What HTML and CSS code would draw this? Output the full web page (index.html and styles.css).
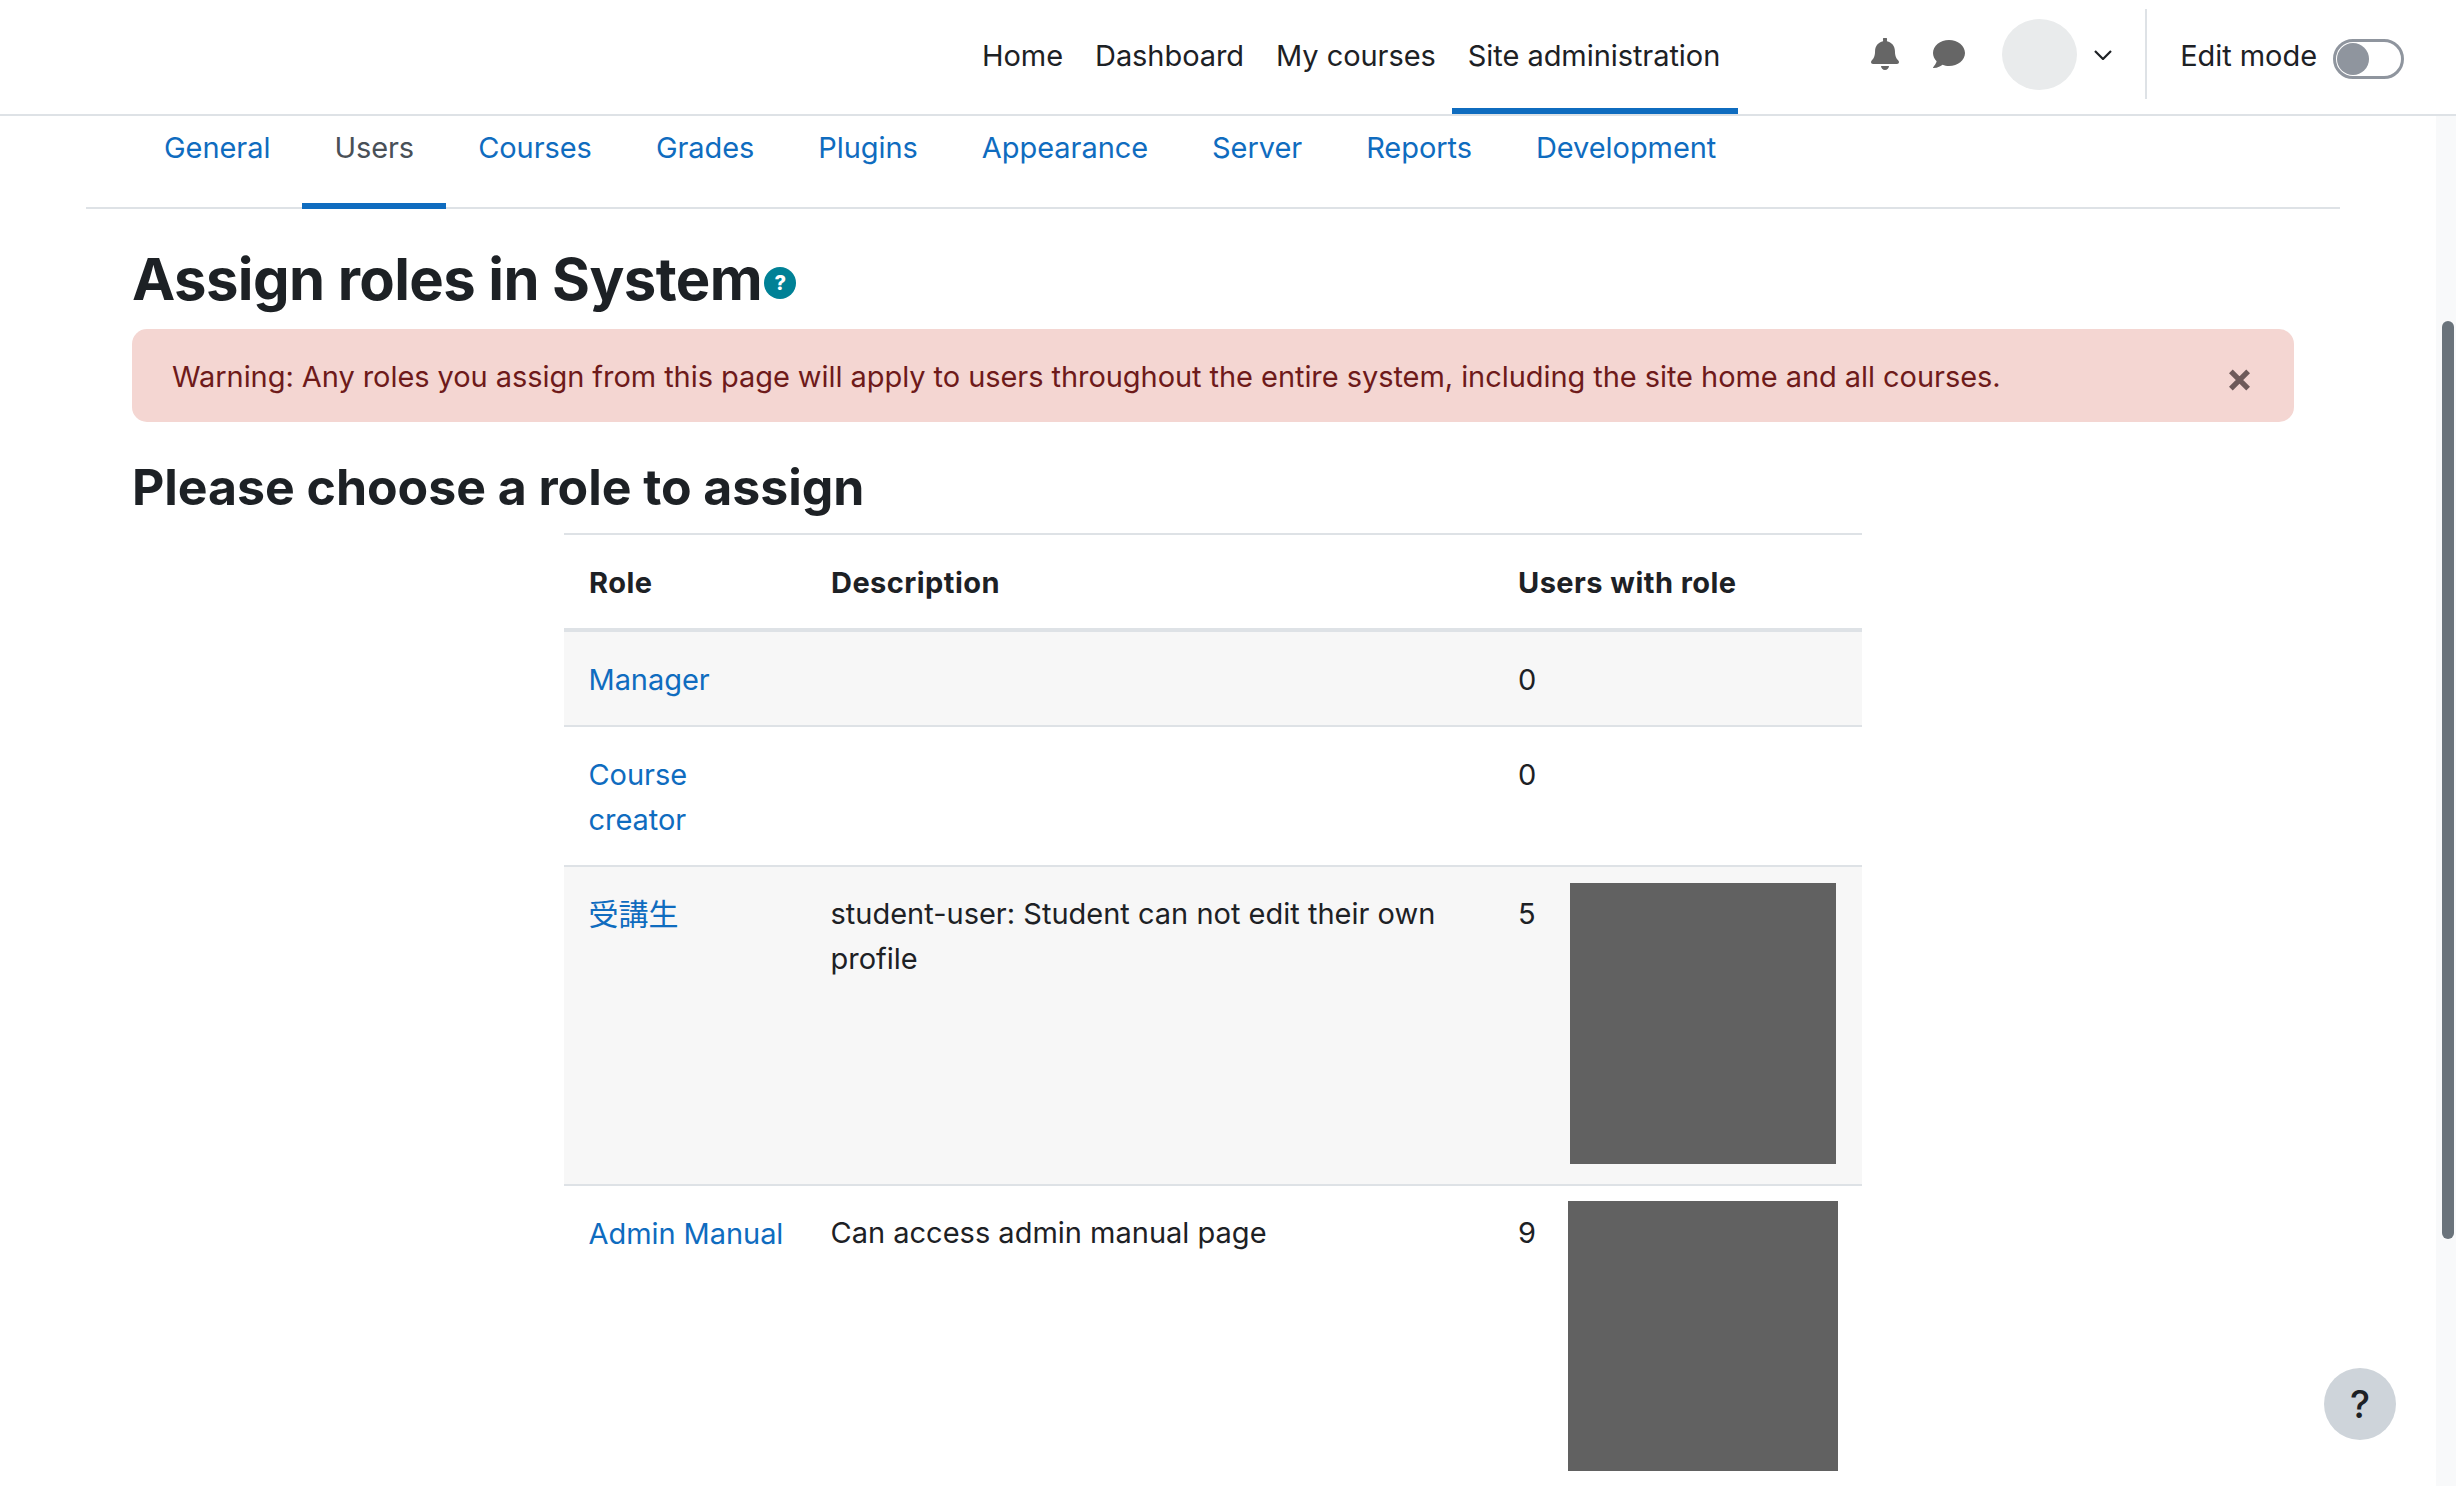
FILE: index.html
```html
<!DOCTYPE html>
<html lang="en">
<head>
<meta charset="utf-8">
<title>Assign roles in System</title>
<link rel="stylesheet" href="styles.css">
</head>
<body>
<header class="topbar">
  <nav class="primary">
    <a class="pitem">Home</a>
    <a class="pitem">Dashboard</a>
    <a class="pitem">My courses</a>
    <a class="pitem active">Site administration</a>
  </nav>
  <div class="usernav">
    <svg class="ico bell" viewBox="0 0 448 512"><path fill="#666" d="M224 512c35 0 64-29 64-64H160c0 35 29 64 64 64zm215-150c-19-21-56-52-56-154 0-78-54-140-128-155V32a32 32 0 1 0-62 0v21C119 68 65 130 65 208c0 102-37 133-56 154-6 6-9 14-9 22 0 16 13 32 32 32h384c19 0 32-16 32-32 0-8-3-16-9-22z"/></svg>
    <svg class="ico chat" viewBox="0 0 512 448"><path fill="#666" d="M256 0C115 0 0 93 0 208c0 50 22 95 58 131-13 50-54 94-55 95-3 3-4 7-2 11s5 3 9 3c67 0 117-32 142-52 32 12 67 20 104 20 141 0 256-93 256-208S397 0 256 0z"/></svg>
    <span class="avatar"></span>
    <svg class="chev" viewBox="1 1 18 10"><path d="M2 2l8 8 8-8" fill="none" stroke="#1d2125" stroke-width="2.2"/></svg>
    <span class="divider"></span>
    <span class="editlabel">Edit mode</span>
    <span class="switch"><span class="knob"></span></span>
  </div>
</header>
<nav class="tabs">
  <a class="tab">General</a>
  <a class="tab current">Users</a>
  <a class="tab">Courses</a>
  <a class="tab">Grades</a>
  <a class="tab">Plugins</a>
  <a class="tab">Appearance</a>
  <a class="tab">Server</a>
  <a class="tab">Reports</a>
  <a class="tab">Development</a>
</nav>
<main class="content">
  <h1 class="title">Assign roles in System<span class="help"><svg viewBox="0 0 32 32"><circle cx="16" cy="16" r="16" fill="#008196"/><text x="16" y="23" class="helpq">?</text></svg></span></h1>
  <div class="alert">
    <span>Warning: Any roles you assign from this page will apply to users throughout the entire system, including the site home and all courses.</span>
    <svg class="close" viewBox="0 0 24 24"><path d="M3 3l18 18M21 3L3 21" stroke="#6e5a5a" stroke-width="5.5" fill="none"/></svg>
  </div>
  <h2 class="subtitle">Please choose a role to assign</h2>
  <table class="roles">
    <thead>
      <tr><th class="c1">Role</th><th class="c2">Description</th><th class="c3">Users with role</th></tr>
    </thead>
    <tbody>
      <tr class="odd"><td class="rolecell"><a>Manager</a></td><td></td><td>0</td></tr>
      <tr><td class="rolecell"><a>Course creator</a></td><td></td><td>0</td></tr>
      <tr class="odd"><td class="rolecell"><a class="cjk">受講生</a></td><td class="desc">student-user: Student can not edit their own profile</td><td><div class="users"><span class="count">5</span><div class="ph ph1"></div></div></td></tr>
      <tr><td class="rolecell"><a>Admin Manual</a></td><td class="desc">Can access admin manual page</td><td><div class="users"><span class="count">9</span><div class="ph ph2"></div></div></td></tr>
    </tbody>
  </table>
</main>
<div class="helpfab">?</div>
<div class="scrolltrack"><div class="scrollthumb"></div></div>
</body>
</html>
```

FILE: styles.css
```css
* { box-sizing: border-box; }
html, body { margin: 0; height: 1486px; overflow: hidden; background: #fff; }
body { font-family: Inter, "Noto Sans CJK JP", sans-serif; font-size: 29px; line-height: 45px; color: #1d2125; letter-spacing: -0.06px; }
a { color: #0f6cbf; text-decoration: none; }

.topbar { height: 116px; border-bottom: 2px solid #dee2e6; display: flex; padding: 0 52px 0 966px; }
.primary { display: flex; height: 114px; }
.pitem { color: #1d2125; padding: 0 16px; line-height: 112px; height: 114px; white-space: nowrap; }
.pitem.active { border-bottom: 6px solid #0f6cbf; padding-right: 18px; }
.usernav { display: flex; align-items: center; height: 108px; margin-left: auto; white-space: nowrap; }
.ico { display: block; }
.bell { width: 28px; height: 32px; }
.chat { width: 32px; height: 28px; margin-left: 34px; }
.avatar { width: 75px; height: 71px; border-radius: 50%; background: #e9ebec; margin-left: 37px; }
.chev { width: 18px; height: 10px; margin: 2px 0 0 17px; }
.divider { width: 2px; height: 90px; background: #dee2e6; margin-left: 33px; }
.editlabel { margin: 3px 0 0 33px; }
.switch { width: 71px; height: 40px; border: 3px solid #8f959e; border-radius: 20px; margin: 10px 0 0 16px; padding: 1px; background: #fff; }
.knob { display: block; width: 32px; height: 32px; border-radius: 50%; background: #8f959e; }

.tabs { display: flex; margin: 0 116px 0 86px; height: 93px; border-bottom: 2px solid #dee2e6; padding-left: 46px; }
.tab { padding: 0 32px; height: 93px; line-height: 63px; white-space: nowrap; }
.tab.current { color: #495057; border-bottom: 6px solid #0f6cbf; }

.content { padding: 0 162px 0 132px; }
.title { margin: 0; font-size: 58px; line-height: 67px; padding-top: 37px; font-weight: 700; letter-spacing: -0.6px; display: flex; align-items: flex-end; }
.help { width: 32px; height: 32px; margin: 0 0 14px 2px; display: block; }
.help svg { display: block; width: 32px; height: 32px; }
.helpq { font-size: 20px; font-weight: 800; fill: #fff; text-anchor: middle; }

.alert { margin-top: 16px; height: 93px; border-radius: 15px; background: #f4d6d2; color: #6e1a1a; display: flex; align-items: center; justify-content: space-between; padding: 2px 43px 0 40px; }
.close { width: 23px; height: 24px; margin-top: 7px; }
.subtitle { margin: 0; font-size: 50px; line-height: 56px; font-weight: 700; padding-top: 37px; letter-spacing: -0.05px; }

.roles { margin: 18px 0 0 432px; width: 1298px; border-collapse: separate; border-spacing: 0; table-layout: fixed; border-top: 2px solid #dee2e6; }
.c1 { width: 242px; } .c2 { width: 687px; }
th { text-align: left; font-weight: 700; padding: 25px 25px 23px; border-bottom: 4px solid #dee2e6; letter-spacing: 0.45px; }
td { padding: 25px 25px 23px; vertical-align: top; border-bottom: 2px solid #dee2e6; }
.rolecell { padding-left: 24.5px; padding-right: 20px; }
.desc { padding-top: 24px; padding-bottom: 24px; padding-left: 24.5px; letter-spacing: 0; }
.cjk { font-size: 30px; }
tr.odd td { background: #f7f7f7; }
.users { display: flex; margin: -9px 0 -3px; }
.count { flex: 0 0 52px; padding-top: 8px; }
.ph { background: #616161; flex: none; }
.ph1 { width: 266px; height: 281px; }
.ph2 { width: 270px; height: 270px; margin: -1px 0 0 -2px; }

.helpfab { position: fixed; left: 2324px; top: 1368px; width: 72px; height: 72px; border-radius: 50%; background: #ced4da; display: flex; align-items: center; justify-content: center; font-size: 38px; font-weight: 500; }
.scrolltrack { position: fixed; right: 0; top: 116px; width: 20px; height: 1370px; background: #f8f9fa; }
.scrollthumb { position: absolute; left: 6px; top: 205px; width: 12px; height: 918px; border-radius: 6px; background: #6a737b; }
```
